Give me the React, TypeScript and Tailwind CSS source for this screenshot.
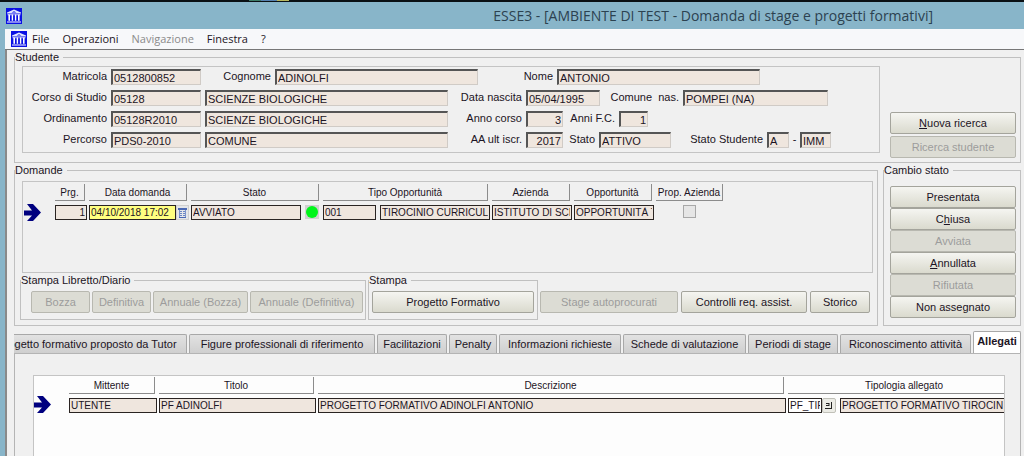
import type { ReactNode } from 'react';
import clsx from 'clsx';

function TempleIcon() {
  return (
    <svg viewBox="0 0 16 16" className="h-4 w-4 shrink-0" aria-hidden="true">
      <rect width="16" height="16" fill="#0a10e4" />
      <path d="M1 4.6 8 1.6l7 3v1H1z" fill="#e4e8ff" />
      <path d="M5.5 4.4 8 3.2l2.5 1.2z" fill="#0a10e4" />
      <path
        d="M1.6 6.2h3.2v1H4v5.6H2.4V7.2h-.8z M5.2 6.2h2.4v1h-.5v5.6H5.7V7.2h-.5z M8.4 6.2h2.4v1h-.5v5.6H8.9V7.2h-.5z M11.2 6.2h3.2v1h-.8v5.6H12V7.2h-.8z M1 13.6h14v1H1z"
        fill="#fff"
      />
    </svg>
  );
}

function RowArrow() {
  return (
    <svg viewBox="0 0 17 17" className="h-[17px] w-[17px]" role="img" aria-label="Riga corrente">
      <path d="M3 0h6l8 8.5L9 17H3l5-5.5H0v-5h8z" fill="#00007f" />
    </svg>
  );
}

interface GroupProps {
  title: string;
  className?: string;
  children: ReactNode;
}

function Group({ title, className, children }: GroupProps) {
  return (
    <fieldset className={clsx('min-w-0 border border-[#c0c0c0]', className)}>
      <legend className="pr-1 text-[11px] leading-[14px]">{title}</legend>
      {children}
    </fieldset>
  );
}

interface FieldProps {
  id: string;
  label?: string;
  name?: string;
  value: string;
  labelClass?: string;
  width: string;
  right?: boolean;
}

function Field({ id, label, name, value, labelClass, width, right }: FieldProps) {
  return (
    <>
      {label && (
        <label htmlFor={id} className={clsx('shrink-0 pr-1 text-right text-[11px] leading-[14px]', labelClass)}>
          {label}
        </label>
      )}
      <input
        id={id}
        aria-label={name}
        readOnly
        defaultValue={value}
        className={clsx(
          'h-4 shrink-0 border-t-2 border-r border-b border-l-2 border-t-[#555] border-r-[#d0cbc6] border-b-[#d0cbc6] border-l-[#555] bg-[#efe6de] px-px text-[11px] leading-3 outline-none',
          right && 'text-right',
          width,
        )}
      />
    </>
  );
}

interface ButtonProps {
  children: ReactNode;
  disabled?: boolean;
  className?: string;
}

function Button({ children, disabled, className }: ButtonProps) {
  return (
    <button
      type="button"
      disabled={disabled}
      className={clsx(
        'h-[22px] shrink-0 rounded-xs border text-[11px] leading-4 whitespace-nowrap',
        disabled
          ? 'border-[#b8b8b0] bg-[#dcdcd4] text-[#9c9c9c]'
          : 'border-[#a4a49c] bg-linear-to-b from-[#f5f5f1] to-[#dadace]',
        className,
      )}
    >
      {children}
    </button>
  );
}

function HeaderCell({ children }: { children: ReactNode }) {
  return (
    <th scope="col" className="p-0 pr-1 font-normal">
      <div className="h-[17px] border-r border-b border-[#8c8c8c] pt-px text-center text-[10px] leading-[15px]">
        {children}
      </div>
    </th>
  );
}

interface CellInputProps {
  name: string;
  value: string;
  className?: string;
}

function CellInput({ name, value, className }: CellInputProps) {
  return (
    <input
      aria-label={name}
      readOnly
      defaultValue={value}
      className={clsx(
        'h-[15px] min-w-0 border border-[#2a2422] px-px text-[10px] leading-3 outline-none',
        className,
      )}
    />
  );
}

const menu = [
  { label: 'File' },
  { label: 'Operazioni' },
  { label: 'Navigazione', disabled: true },
  { label: 'Finestra' },
  { label: '?' },
];

const tabs = [
  { label: 'Progetto formativo proposto da Tutor', width: 'w-[200px]' },
  { label: 'Figure professionali di riferimento', width: 'w-[186px]' },
  { label: 'Facilitazioni', width: 'w-[70px]' },
  { label: 'Penalty', width: 'w-12' },
  { label: 'Informazioni richieste', width: 'w-[122px]' },
  { label: 'Schede di valutazione', width: 'w-[123px]' },
  { label: 'Periodi di stage', width: 'w-[90px]' },
  { label: 'Riconoscimento attività', width: 'w-[131px]' },
];

function StudentPanel() {
  return (
    <Group title="Studente">
      <div className="flex gap-2.5 pt-0.5 pr-1 pl-[7px]">
        <div className="mb-[9px] flex min-w-0 flex-1 flex-col gap-[5px] border border-[#c4c4c4] pt-0.5 pb-1">
          <div className="flex">
            <Field id="matricola" label="Matricola" value="0512800852" labelClass="w-[88px]" width="w-[90px]" />
            <Field id="cognome" label="Cognome" value="ADINOLFI" labelClass="w-[74px]" width="w-[203px]" />
            <Field id="nome" label="Nome" value="ANTONIO" labelClass="w-[79px]" width="w-[203px]" />
          </div>
          <div className="flex">
            <Field id="corso" label="Corso di Studio" value="05128" labelClass="w-[88px]" width="w-[90px]" />
            <div className="w-1 shrink-0" />
            <Field id="corso-desc" name="Descrizione corso" value="SCIENZE BIOLOGICHE" width="w-[243px]" />
            <Field id="nascita" label="Data nascita" value="05/04/1995" labelClass="w-[78px]" width="w-[74px]" />
            <Field id="comune" label="Comune  nas." value="POMPEI (NA)" labelClass="w-[83px] whitespace-pre" width="w-[145px]" />
          </div>
          <div className="flex">
            <Field id="ordinamento" label="Ordinamento" value="05128R2010" labelClass="w-[88px]" width="w-[90px]" />
            <div className="w-1 shrink-0" />
            <Field id="ordinamento-desc" name="Descrizione ordinamento" value="SCIENZE BIOLOGICHE" width="w-[243px]" />
            <Field id="anno" label="Anno corso" value="3" labelClass="w-[78px]" width="w-[37px]" right />
            <Field id="fc" label="Anni F.C." value="1" labelClass="w-14" width="w-[29px]" right />
          </div>
          <div className="flex">
            <Field id="percorso" label="Percorso" value="PDS0-2010" labelClass="w-[88px]" width="w-[90px]" />
            <div className="w-1 shrink-0" />
            <Field id="percorso-desc" name="Descrizione percorso" value="COMUNE" width="w-[243px]" />
            <Field id="iscr" label="AA ult iscr." value="2017" labelClass="w-[78px]" width="w-[37px]" right />
            <Field id="stato" label="Stato" value="ATTIVO" labelClass="w-9" width="w-[72px]" />
            <Field id="stato-studente" label="Stato Studente" value="A" labelClass="w-24" width="w-[22px]" />
            <span className="w-[11px] shrink-0 text-center text-[11px] leading-[14px]">-</span>
            <Field id="stato-motivo" name="Motivo stato studente" value="IMM" width="w-[31px]" />
          </div>
        </div>
        <div className="flex w-[126px] shrink-0 flex-col justify-end gap-0.5 pb-1">
          <Button>
            <u>N</u>uova ricerca
          </Button>
          <Button disabled>Ricerca studente</Button>
        </div>
      </div>
    </Group>
  );
}

function RequestsTable() {
  return (
    <div className="h-[92px] overflow-hidden border border-[#c4c4c4] pt-0.5">
      <table className="w-[704px] table-fixed">
        <colgroup>
          <col className="w-8" />
          <col className="w-[34px]" />
          <col className="w-[102px]" />
          <col className="w-[132px]" />
          <col className="w-[169px]" />
          <col className="w-[82px]" />
          <col className="w-[82px]" />
          <col className="w-[71px]" />
        </colgroup>
        <thead>
          <tr>
            <td />
            <HeaderCell>Prg.</HeaderCell>
            <HeaderCell>Data domanda</HeaderCell>
            <HeaderCell>Stato</HeaderCell>
            <HeaderCell>Tipo Opportunità</HeaderCell>
            <HeaderCell>Azienda</HeaderCell>
            <HeaderCell>Opportunità</HeaderCell>
            <HeaderCell>Prop. Azienda</HeaderCell>
          </tr>
        </thead>
        <tbody>
          <tr className="align-top">
            <td className="pt-[3px] pl-px">
              <RowArrow />
            </td>
            <td className="pt-1 pr-0.5">
              <div className="flex">
                <CellInput name="Prg." value="1" className="w-full bg-[#efe6de] text-right" />
              </div>
            </td>
            <td className="pt-1 pr-0.5">
              <div className="flex">
                <CellInput name="Data domanda" value="04/10/2018 17:02" className="w-[87px] bg-[#ffff80]" />
                <button
                  type="button"
                  aria-label="Apri calendario"
                  className="flex h-[15px] w-[13px] items-center justify-center border border-[#d0d0d0] bg-[#e4e6ea]"
                >
                  <svg viewBox="0 0 9 10" className="h-2.5 w-[9px] shrink-0" aria-hidden="true">
                    <path d="M0 0h9v2H0z M1 9h7v1H1z" fill="#4a68b4" />
                    <path d="M1.5 2v7M7.5 2v7" stroke="#7c94cc" fill="none" />
                    <path d="M2 3.5h2M5 3.5h2M2 5.5h2M5 5.5h2M2 7.5h2M5 7.5h2" stroke="#6a86c4" fill="none" />
                  </svg>
                </button>
              </div>
            </td>
            <td className="pt-1">
              <div className="flex gap-1">
                <CellInput name="Stato" value="AVVIATO" className="w-[110px] bg-[#efe6de]" />
                <svg viewBox="0 0 14 14" className="h-3.5 w-3.5" role="img" aria-label="Attivo">
                  <rect width="14" height="14" fill="#d0d0d0" />
                  <circle cx="7" cy="7" r="6" fill="#00f51a" />
                </svg>
              </div>
            </td>
            <td className="pt-1 pr-0.5">
              <div className="flex gap-1">
                <CellInput name="Codice tipo opportunità" value="001" className="w-[53px] bg-[#efe6de]" />
                <CellInput name="Tipo opportunità" value="TIROCINIO CURRICULARE" className="flex-1 bg-[#efe6de]" />
              </div>
            </td>
            <td className="pt-1 pr-0.5">
              <div className="flex">
                <CellInput name="Azienda" value="ISTITUTO DI SCIENZE" className="w-full bg-[#efe6de]" />
              </div>
            </td>
            <td className="pt-1 pr-0.5">
              <div className="flex">
                <CellInput name="Opportunità" value="OPPORTUNITÀ TEST" className="w-full bg-[#efe6de]" />
              </div>
            </td>
            <td className="pt-1 pr-1">
              <div className="flex justify-center">
                <input
                  type="checkbox"
                  aria-label="Prop. Azienda"
                  className="h-[13px] w-[13px] appearance-none border border-[#a8a8a8] bg-[#e6e6e6]"
                />
              </div>
            </td>
          </tr>
        </tbody>
      </table>
    </div>
  );
}

function RequestsPanel() {
  return (
    <Group title="Domande" className="flex-1">
      <div className="flex flex-col pt-1 pr-1 pb-[5px] pl-[7px]">
        <RequestsTable />
        <div className="-ml-0.5 flex">
          <Group title="Stampa Libretto/Diario">
            <div className="flex gap-0.5 pt-1 pr-0.5 pb-1.5 pl-2.5">
              <Button disabled className="w-[59px]">Bozza</Button>
              <Button disabled className="w-[59px]">Definitiva</Button>
              <Button disabled className="w-[95px]">Annuale (Bozza)</Button>
              <Button disabled className="w-[113px]">Annuale (Definitiva)</Button>
            </div>
          </Group>
          <Group title="Stampa" className="ml-0.5">
            <div className="flex pt-1 pr-[3px] pb-1.5 pl-[3px]">
              <Button className="w-[162px]">Progetto Formativo</Button>
            </div>
          </Group>
          <div className="flex flex-1 gap-[3px] pt-[18px] pl-0.5">
            <Button disabled className="w-[138px]">Stage autoprocurati</Button>
            <Button className="w-[126px]">Controlli req. assist.</Button>
            <Button className="w-[60px]">Storico</Button>
          </div>
        </div>
      </div>
    </Group>
  );
}

function StatusPanel() {
  return (
    <Group title="Cambio stato" className="w-[138px] shrink-0">
      <div className="flex flex-col pt-[9px] pr-1 pl-1.5">
        <Button>Presentata</Button>
        <Button>
          C<u>h</u>iusa
        </Button>
        <Button disabled>Avviata</Button>
        <Button>
          <u>A</u>nnullata
        </Button>
        <Button disabled>Rifiutata</Button>
        <Button>Non assegnato</Button>
      </div>
    </Group>
  );
}

function Attachments() {
  return (
    <div className="flex-1 overflow-hidden border border-b-0 border-[#c4c4c4] bg-[#fdfdfd] pt-px">
      <table className="w-full min-w-[970px] table-fixed">
        <colgroup>
          <col className="w-[35px]" />
          <col className="w-[90px]" />
          <col className="w-[159px]" />
          <col />
          <col className="w-[216px]" />
        </colgroup>
        <thead>
          <tr>
            <td />
            <HeaderCell>Mittente</HeaderCell>
            <HeaderCell>Titolo</HeaderCell>
            <HeaderCell>Descrizione</HeaderCell>
            <th scope="col" className="p-0 font-normal">
              <div className="h-[17px] border-b border-[#8c8c8c] pt-px pl-4 text-center text-[10px] leading-[15px]">
                Tipologia allegato
              </div>
            </th>
          </tr>
        </thead>
        <tbody>
          <tr className="align-top">
            <td className="pt-0.5">
              <RowArrow />
            </td>
            <td className="pt-1 pr-0.5">
              <div className="flex">
                <CellInput name="Mittente" value="UTENTE" className="w-full bg-[#efe6de]" />
              </div>
            </td>
            <td className="pt-1 pr-0.5">
              <div className="flex">
                <CellInput name="Titolo" value="PF ADINOLFI" className="w-full bg-[#efe6de]" />
              </div>
            </td>
            <td className="pt-1 pr-0.5">
              <div className="flex">
                <CellInput
                  name="Descrizione"
                  value="PROGETTO FORMATIVO ADINOLFI ANTONIO"
                  className="w-full bg-[#efe6de]"
                />
              </div>
            </td>
            <td className="pt-1">
              <div className="flex">
                <CellInput name="Codice tipologia" value="PF_TIROCINIO" className="w-[34px] bg-white" />
                <button
                  type="button"
                  aria-label="Scegli tipologia"
                  className="mr-1 flex h-[15px] w-[14px] items-center justify-center rounded-xs border border-[#c0c0b8] bg-[#ecece6]"
                >
                  <svg viewBox="0 0 8 8" className="h-2 w-2 shrink-0" aria-hidden="true">
                    <path d="M1 1.5h3M1 3.5h3M0 6.5h7M6.5 0v7M4 1v3" stroke="#222" fill="none" />
                  </svg>
                </button>
                <CellInput
                  name="Tipologia allegato"
                  value="PROGETTO FORMATIVO TIROCINIO"
                  className="flex-1 border-r-0 bg-[#efe6de]"
                />
              </div>
            </td>
          </tr>
        </tbody>
      </table>
    </div>
  );
}

export default function App() {
  return (
    <div className="flex min-h-screen flex-col bg-[#88b5c9] font-['Liberation_Sans',Arial,sans-serif] text-[#1c1424]">
      <div className="flex h-0.5 bg-[#0a1014] pl-[249px]">
        <div className="h-px w-3 bg-[#3c7c68]" />
        <div className="h-px w-4 bg-[#5580b0]" />
        <div className="h-px w-3 bg-[#b8b860]" />
      </div>
      <header className="flex h-[27px] items-center pr-[91px] pl-1.5">
        <TempleIcon />
        <h1 className="flex-1 text-right font-['Open_Sans','Noto_Sans',sans-serif] text-sm whitespace-nowrap text-[#2c4250]">
          ESSE3 - [AMBIENTE DI TEST - Domanda di stage e progetti formativi]
        </h1>
      </header>
      <nav className="ml-[5px] flex h-[21px] items-center gap-[13px] border-b border-[#777] bg-[#f7f8fa] pl-1.5 font-['Open_Sans','Noto_Sans',sans-serif] text-[11px]">
        <div className="-mr-2">
          <TempleIcon />
        </div>
        {menu.map((item) => (
          <button key={item.label} type="button" disabled={item.disabled} className="disabled:text-[#8a8a8a]">
            {item.label}
          </button>
        ))}
      </nav>
      <main className="ml-[5px] flex flex-1 flex-col border-l-2 border-[#8a8a8a] bg-[#f0f0f0] pr-[3px] pl-[7px]">
        <StudentPanel />
        <div className="flex gap-[5px]">
          <RequestsPanel />
          <StatusPanel />
        </div>
        <div role="tablist" className="mt-[5px] flex items-end justify-end gap-0.5 overflow-hidden">
          {tabs.map((tab) => (
            <button
              key={tab.label}
              type="button"
              role="tab"
              aria-selected={false}
              className={clsx(
                'h-[19px] shrink-0 rounded-t-xs border border-b-0 border-[#a8a8a8] bg-linear-to-b from-[#e2e2e2] to-[#cfcfcf] text-[11px] leading-4 whitespace-nowrap',
                tab.width,
              )}
            >
              {tab.label}
            </button>
          ))}
          <button
            type="button"
            role="tab"
            aria-selected
            className="h-[22px] w-12 shrink-0 rounded-t-xs border border-b-0 border-[#a8a8a8] bg-white pb-0.5 text-[11px] font-bold"
          >
            Allegati
          </button>
        </div>
        <div className="flex flex-1 flex-col border-t border-r border-l border-[#b4b4b4] pt-[21px] pr-[15px] pl-[18px]">
          <Attachments />
        </div>
      </main>
    </div>
  );
}
